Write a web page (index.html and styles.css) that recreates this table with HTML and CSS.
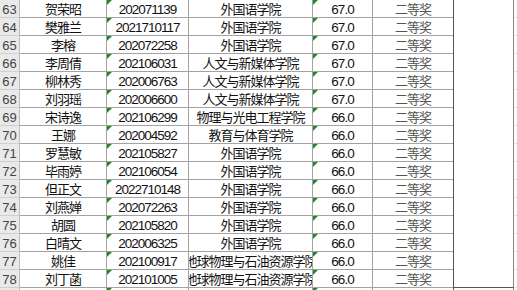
FILE: index.html
```html
<!DOCTYPE html>
<html lang="zh-CN">
<head>
  <meta charset="UTF-8" />
  <title>获奖名单</title>
  <link rel="stylesheet" href="styles.css">
</head>
<body>
  <div class="sheet">
    <div class="box"></div>

    <div class="rh">63</div><div class="c cjk">贺荣昭</div><div class="c num tri">202071139</div><div class="c cjk">外国语学院</div><div class="c num tri">67.0</div><div class="c cjk prize">二等奖</div><div class="rest"></div>
    <div class="rh">64</div><div class="c cjk">樊雅兰</div><div class="c num tri">2021710117</div><div class="c cjk">外国语学院</div><div class="c num tri">67.0</div><div class="c cjk prize">二等奖</div><div class="rest"></div>
    <div class="rh">65</div><div class="c cjk">李榕</div><div class="c num tri">202072258</div><div class="c cjk">外国语学院</div><div class="c num tri">67.0</div><div class="c cjk prize">二等奖</div><div class="rest"></div>
    <div class="rh">66</div><div class="c cjk">李周倩</div><div class="c num tri">202106031</div><div class="c cjk">人文与新媒体学院</div><div class="c num tri">67.0</div><div class="c cjk prize">二等奖</div><div class="rest"></div>
    <div class="rh">67</div><div class="c cjk">柳林秀</div><div class="c num tri">202006763</div><div class="c cjk">人文与新媒体学院</div><div class="c num tri">67.0</div><div class="c cjk prize">二等奖</div><div class="rest"></div>
    <div class="rh">68</div><div class="c cjk">刘羽瑶</div><div class="c num tri">202006600</div><div class="c cjk">人文与新媒体学院</div><div class="c num tri">67.0</div><div class="c cjk prize">二等奖</div><div class="rest"></div>
    <div class="rh">69</div><div class="c cjk">宋诗逸</div><div class="c num tri">202106299</div><div class="c cjk">物理与光电工程学院</div><div class="c num tri">66.0</div><div class="c cjk prize">二等奖</div><div class="rest"></div>
    <div class="rh">70</div><div class="c cjk">王娜</div><div class="c num tri">202004592</div><div class="c cjk">教育与体育学院</div><div class="c num tri">66.0</div><div class="c cjk prize">二等奖</div><div class="rest"></div>
    <div class="rh">71</div><div class="c cjk">罗慧敏</div><div class="c num tri">202105827</div><div class="c cjk">外国语学院</div><div class="c num tri">66.0</div><div class="c cjk prize">二等奖</div><div class="rest"></div>
    <div class="rh">72</div><div class="c cjk">毕雨婷</div><div class="c num tri">202106054</div><div class="c cjk">外国语学院</div><div class="c num tri">66.0</div><div class="c cjk prize">二等奖</div><div class="rest"></div>
    <div class="rh">73</div><div class="c cjk">但正文</div><div class="c num tri">2022710148</div><div class="c cjk">外国语学院</div><div class="c num tri">66.0</div><div class="c cjk prize">二等奖</div><div class="rest"></div>
    <div class="rh">74</div><div class="c cjk">刘燕婵</div><div class="c num tri">202072263</div><div class="c cjk">外国语学院</div><div class="c num tri">66.0</div><div class="c cjk prize">二等奖</div><div class="rest"></div>
    <div class="rh">75</div><div class="c cjk">胡圆</div><div class="c num tri">202105820</div><div class="c cjk">外国语学院</div><div class="c num tri">66.0</div><div class="c cjk prize">二等奖</div><div class="rest"></div>
    <div class="rh">76</div><div class="c cjk">白晴文</div><div class="c num tri">202006325</div><div class="c cjk">外国语学院</div><div class="c num tri">66.0</div><div class="c cjk prize">二等奖</div><div class="rest"></div>
    <div class="rh">77</div><div class="c cjk">姚佳</div><div class="c num tri">202100917</div><div class="c cjk">地球物理与石油资源学院</div><div class="c num tri">66.0</div><div class="c cjk prize">二等奖</div><div class="rest"></div>
    <div class="rh">78</div><div class="c cjk">刘丁菡</div><div class="c num tri">202101005</div><div class="c cjk">地球物理与石油资源学院</div><div class="c num tri">66.0</div><div class="c cjk prize">二等奖</div><div class="rest"></div>
    <div class="rh"></div><div class="c cjk"></div><div class="c num tri"></div><div class="c cjk"></div><div class="c num tri"></div><div class="c cjk prize"></div><div class="c blank"></div><div class="rest"></div>
  </div>
</body>
</html>
```

FILE: styles.css
```css
* {
  box-sizing: border-box;
}
body {
  margin: 0;
  background: #fff;
  overflow: hidden;
  height: 290px;
}
.sheet {
  display: grid;
  grid-template-columns: 20px 87px 82px 124px 60px 80px 61px 1fr;
  grid-auto-rows: 18px;
}
.rh {
  background: #e9e9e9;
  border-right: 1px solid #bcbcbc;
  border-bottom: 1px solid #cfcfcf;
  color: #444;
  font: 13px/20px "Liberation Sans", Arial, sans-serif;
  text-align: center;
  overflow: hidden;
}
.c {
  position: relative;
  display: flex;
  justify-content: center;
  align-items: flex-start;
  overflow: hidden;
  white-space: nowrap;
  border-right: 1px solid #a3a3a3;
  border-bottom: 1px solid #a3a3a3;
  color: #111;
}
.prize {
  border-right: none;
  color: #555;
}
.blank {
  border-left: 1px solid #555;
  border-right: 1px solid #888;
}
.num {
  font: 13.5px/20px "Liberation Sans", Arial, sans-serif;
  letter-spacing: -1px;
}
.cjk {
  font: 13px/17px "Noto Sans CJK SC", sans-serif;
  letter-spacing: -1px;
}
.tri::before {
  content: "";
  position: absolute;
  top: 0;
  left: 0;
  border-top: 5px solid #1f8a2a;
  border-right: 5px solid transparent;
}
.box {
  grid-column: 7;
  grid-row: 1 / span 16;
  border-left: 1px solid #555;
  border-right: 1px solid #888;
  border-bottom: 1px solid #555;
}
.rest {
  border-bottom: 1px solid #e0e0e0;
}
```
